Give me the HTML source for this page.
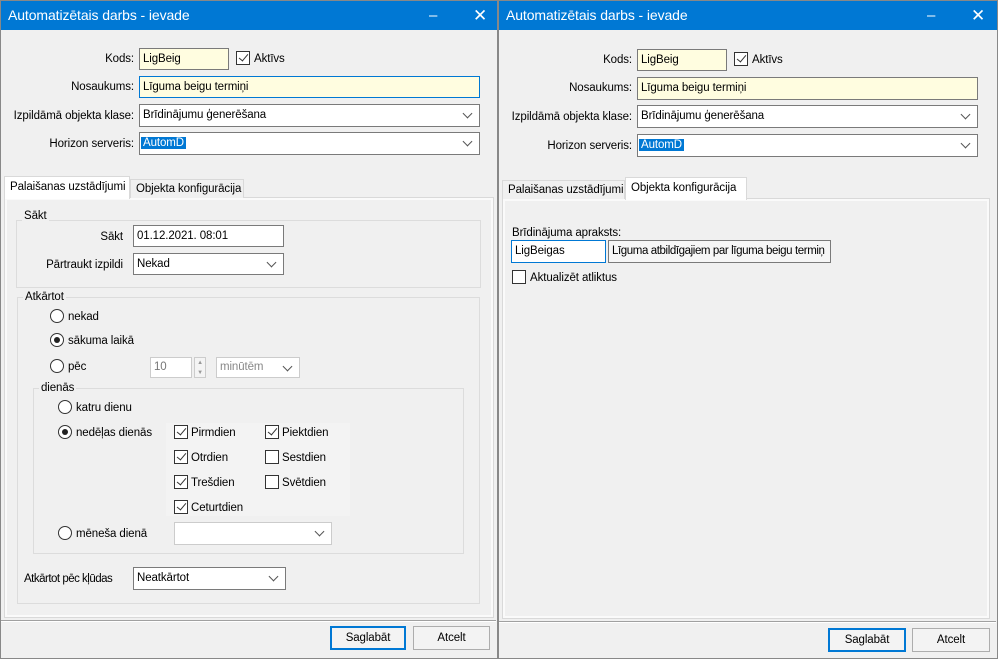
<!DOCTYPE html>
<html><head><meta charset="utf-8"><style>
*{box-sizing:border-box;margin:0;padding:0}
body{width:998px;height:659px;background:#fff;position:relative;overflow:hidden;font-family:"Liberation Sans",sans-serif;font-size:11.5px;letter-spacing:-0.1px;color:#000}
.a{position:absolute}
.win{position:absolute;top:0;height:659px;background:#f0f0f0;border:1px solid #888}
.tb{position:absolute;left:0;right:0;top:0;height:29px;background:#0078d4;color:#fff;font-size:14px;line-height:29px;padding-left:7px}
.tb .m{position:absolute;top:0;font-size:15px}
.lbl{position:absolute;text-align:right;line-height:14px;white-space:nowrap}
.inp{position:absolute;background:#fff;border:1px solid #7a7a7a;padding-left:3px;line-height:20px;white-space:nowrap;overflow:hidden}
.yel{background:#fffde0}
.cmb::after{content:"";position:absolute;right:8px;top:5px;width:6px;height:6px;border-right:1px solid #555;border-bottom:1px solid #555;transform:rotate(45deg)}
.grp{position:absolute;border:1px solid #dcdcdc}
.gt{position:absolute;background:#f0f0f0;padding:0 2px;line-height:14px}
.rad{position:absolute;width:14px;height:14px;border:1px solid #333;border-radius:50%;background:#fff}
.rad.on::after{content:"";position:absolute;left:3px;top:3px;width:6px;height:6px;border-radius:50%;background:#222}
.cb{position:absolute;width:14px;height:14px;border:1px solid #333;background:#fff}
.cb.on::after{content:"";position:absolute;left:4px;top:0px;width:4px;height:8px;border-right:1px solid #333;border-bottom:1px solid #333;transform:rotate(40deg)}
.t{position:absolute;line-height:14px;white-space:nowrap}
.btn{position:absolute;border:1px solid #adadad;background:#f3f3f3;text-align:center;line-height:22px}
.btn.def{border:2px solid #0078d4;line-height:20px}
.tab{position:absolute;border:1px solid #d9d9d9;border-bottom:none;background:#f0f0f0;padding-left:5px;line-height:20px;white-space:nowrap;overflow:hidden}
.tab.act{background:#fff;z-index:2}
.panel{position:absolute;border:1px solid #d9d9d9;background:#f0f0f0;box-shadow:inset 0 0 0 2px #fafafa}
</style></head><body>

<!-- LEFT WINDOW -->
<div class="win" style="left:0;width:498px">
<div class="tb">Automatizētais darbs - ievade<span class="m" style="left:428px">–</span><span class="m" style="left:472px;font-size:17px">✕</span></div>
</div>
<div class="lbl" style="left:40px;width:94px;top:52px">Kods:</div>
<div class="inp yel" style="left:139px;top:48px;width:90px;height:22px">LigBeig</div>
<div class="cb on" style="left:236px;top:51px"></div><div class="t" style="left:254px;top:52px">Aktīvs</div>
<div class="lbl" style="left:20px;width:114px;top:80px">Nosaukums:</div>
<div class="inp yel" style="left:139px;top:76px;width:341px;height:22px;border-color:#0078d4">Līguma beigu termiņi</div>
<div class="lbl" style="left:0;width:134px;top:109px">Izpildāmā objekta klase:</div>
<div class="inp cmb" style="left:139px;top:104px;width:341px;height:23px">Brīdinājumu ģenerēšana</div>
<div class="lbl" style="left:0;width:134px;top:137px">Horizon serveris:</div>
<div class="inp cmb" style="left:139px;top:132px;width:341px;height:23px;padding-left:1px"><span style="background:#0078d4;color:#fff;padding:0 2px">AutomD</span></div>

<div class="panel" style="left:4px;top:197px;width:490px;height:421px"></div>
<div class="tab act" style="left:4px;top:176px;width:126px;height:23px">Palaišanas uzstādījumi</div>
<div class="tab" style="left:130px;top:179px;width:114px;height:19px;line-height:18px">Objekta konfigurācija</div>

<div class="grp" style="left:16px;top:220px;width:465px;height:68px"></div>
<div class="gt" style="left:22px;top:209px">Sākt</div>
<div class="lbl" style="left:60px;width:63px;top:230px">Sākt</div>
<div class="inp" style="left:133px;top:225px;width:151px;height:22px">01.12.2021. 08:01</div>
<div class="lbl" style="left:20px;width:103px;top:258px">Pārtraukt izpildi</div>
<div class="inp cmb" style="left:133px;top:253px;width:151px;height:22px">Nekad</div>

<div class="grp" style="left:17px;top:297px;width:463px;height:307px"></div>
<div class="gt" style="left:23px;top:290px">Atkārtot</div>
<div class="rad" style="left:50px;top:309px"></div><div class="t" style="left:68px;top:310px">nekad</div>
<div class="rad on" style="left:50px;top:333px"></div><div class="t" style="left:68px;top:334px">sākuma laikā</div>
<div class="rad" style="left:50px;top:359px"></div><div class="t" style="left:68px;top:360px">pēc</div>
<div class="inp" style="left:150px;top:357px;width:42px;height:21px;color:#777;border-color:#ccc;line-height:19px">10</div>
<div class="a" style="left:194px;top:357px;width:12px;height:21px;border:1px solid #ccc;background:#f4f4f4;font-size:6px;color:#999;text-align:center;line-height:10px">▲<br>▼</div>
<div class="inp cmb" style="left:216px;top:357px;width:84px;height:21px;color:#888;border-color:#ccc;line-height:19px">minūtēm</div>

<div class="grp" style="left:33px;top:388px;width:431px;height:166px"></div>
<div class="gt" style="left:39px;top:381px">dienās</div>
<div class="rad" style="left:58px;top:400px"></div><div class="t" style="left:76px;top:401px">katru dienu</div>
<div class="rad on" style="left:58px;top:425px"></div><div class="t" style="left:76px;top:426px">nedēļas dienās</div>
<div class="a" style="left:166px;top:423px;width:184px;height:93px;background:#f3f3f3"></div>
<div class="cb on" style="left:174px;top:425px"></div><div class="t" style="left:191px;top:426px">Pirmdien</div>
<div class="cb on" style="left:174px;top:450px"></div><div class="t" style="left:191px;top:451px">Otrdien</div>
<div class="cb on" style="left:174px;top:475px"></div><div class="t" style="left:191px;top:476px">Trešdien</div>
<div class="cb on" style="left:174px;top:500px"></div><div class="t" style="left:191px;top:501px">Ceturtdien</div>
<div class="cb on" style="left:265px;top:425px"></div><div class="t" style="left:282px;top:426px">Piektdien</div>
<div class="cb" style="left:265px;top:450px"></div><div class="t" style="left:282px;top:451px">Sestdien</div>
<div class="cb" style="left:265px;top:475px"></div><div class="t" style="left:282px;top:476px">Svētdien</div>
<div class="rad" style="left:58px;top:526px"></div><div class="t" style="left:76px;top:527px">mēneša dienā</div>
<div class="inp cmb" style="left:174px;top:522px;width:158px;height:23px;border-color:#ccc"></div>

<div class="t" style="left:24px;top:572px;letter-spacing:-0.5px">Atkārtot pēc kļūdas</div>
<div class="inp cmb" style="left:133px;top:567px;width:153px;height:23px">Neatkārtot</div>

<div class="a" style="left:1px;top:620px;width:495px;height:2px;border-top:1px solid #a0a0a0;border-bottom:1px solid #fff"></div>
<div class="btn def" style="left:330px;top:626px;width:76px;height:24px">Saglabāt</div>
<div class="btn" style="left:413px;top:626px;width:77px;height:24px">Atcelt</div>

<!-- RIGHT WINDOW -->
<div class="win" style="left:498px;width:500px">
<div class="tb">Automatizētais darbs - ievade<span class="m" style="left:428px">–</span><span class="m" style="left:472px;font-size:17px">✕</span></div>
</div>
<div class="lbl" style="left:538px;width:94px;top:53px">Kods:</div>
<div class="inp yel" style="left:637px;top:49px;width:90px;height:22px">LigBeig</div>
<div class="cb on" style="left:734px;top:52px"></div><div class="t" style="left:752px;top:53px">Aktīvs</div>
<div class="lbl" style="left:518px;width:114px;top:81px">Nosaukums:</div>
<div class="inp yel" style="left:637px;top:77px;width:341px;height:23px">Līguma beigu termiņi</div>
<div class="lbl" style="left:498px;width:134px;top:110px">Izpildāmā objekta klase:</div>
<div class="inp cmb" style="left:637px;top:105px;width:341px;height:23px">Brīdinājumu ģenerēšana</div>
<div class="lbl" style="left:498px;width:134px;top:139px">Horizon serveris:</div>
<div class="inp cmb" style="left:637px;top:134px;width:341px;height:23px;padding-left:1px"><span style="background:#0078d4;color:#fff;padding:0 2px">AutomD</span></div>

<div class="panel" style="left:502px;top:198px;width:488px;height:421px"></div>
<div class="tab" style="left:502px;top:180px;width:123px;height:19px;line-height:18px">Palaišanas uzstādījumi</div>
<div class="tab act" style="left:625px;top:177px;width:122px;height:23px">Objekta konfigurācija</div>
<div class="t" style="left:512px;top:226px">Brīdinājuma apraksts:</div>
<div class="inp" style="left:511px;top:240px;width:95px;height:23px;border-color:#0078d4">LigBeigas</div>
<div class="inp" style="left:608px;top:240px;width:223px;height:23px;background:#f6f6f6;letter-spacing:-0.4px">Līguma atbildīgajiem par līguma beigu termiņ</div>
<div class="cb" style="left:512px;top:270px"></div><div class="t" style="left:530px;top:271px">Aktualizēt atliktus</div>

<div class="a" style="left:499px;top:621px;width:497px;height:2px;border-top:1px solid #a0a0a0;border-bottom:1px solid #fff"></div>
<div class="btn def" style="left:828px;top:628px;width:78px;height:24px">Saglabāt</div>
<div class="btn" style="left:912px;top:628px;width:78px;height:24px">Atcelt</div>
</body></html>
